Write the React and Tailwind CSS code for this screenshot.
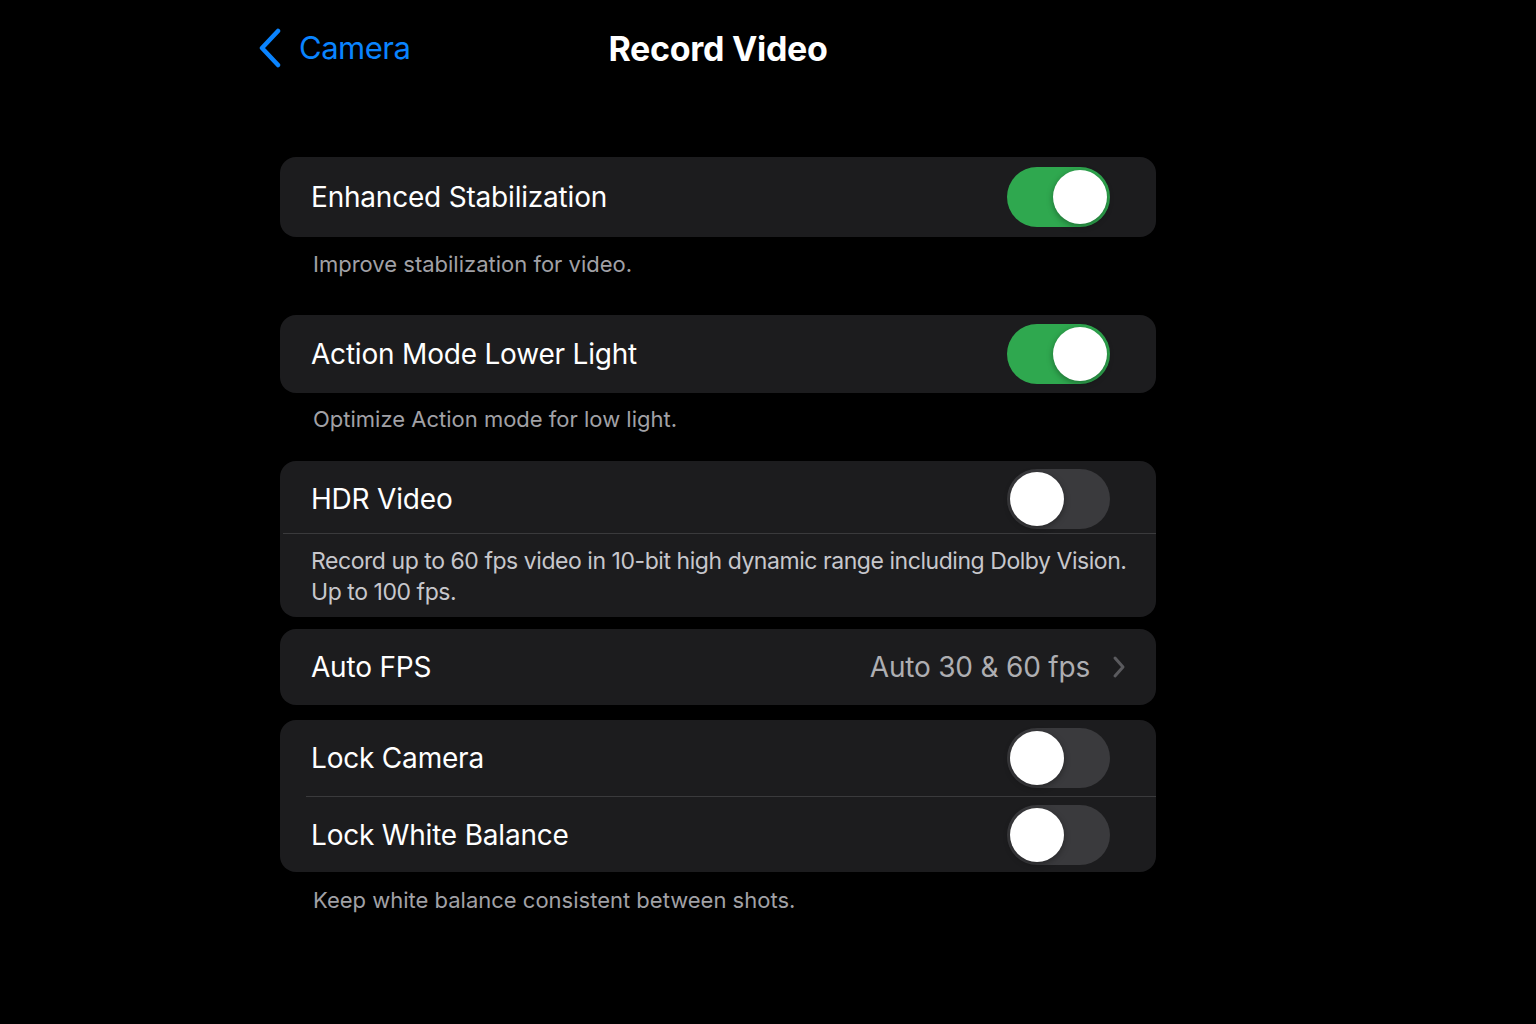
import React from "react";

function Toggle({ on }) {
  return (
    <div
      className={`relative w-[103px] h-[60px] rounded-full shrink-0 ${on ? "bg-[#2fa84f]" : "bg-[#3a3a3d]"}`}
    >
      <div
        className={`absolute top-[3px] w-[54px] h-[54px] rounded-full bg-white shadow-[0_2px_6px_rgba(0,0,0,0.35)] ${on ? "right-[3px]" : "left-[3px]"}`}
      />
    </div>
  );
}

function Row({ label, children, className = "" }) {
  return (
    <div className={`flex items-center justify-between pl-[31px] pr-[46px] ${className}`}>
      <span className="text-white text-[28px] tracking-[-0.2px]">{label}</span>
      {children}
    </div>
  );
}

function Footer({ children, className = "" }) {
  return (
    <p className={`pl-[33px] text-[22px] text-[#a1a1a6] ${className}`}>{children}</p>
  );
}

export default function App() {
  return (
    <div className="min-h-screen bg-black font-['Inter','Liberation_Sans',sans-serif] antialiased">
      <div className="w-[920px] ml-[258px] pt-[26px]">
        <div className="relative flex items-center h-[44px]">
          <div className="flex items-center gap-[17px] text-[#0a84ff]">
            <svg width="24" height="40" viewBox="0 0 24 40" fill="none">
              <path
                d="M20 3 L4 20 L20 37"
                stroke="#0a84ff"
                strokeWidth="4.5"
                strokeLinecap="round"
                strokeLinejoin="round"
              />
            </svg>
            <span className="text-[31px] tracking-[-0.5px]">Camera</span>
          </div>
          <h1 className="absolute inset-x-0 text-center text-white text-[34px] font-bold tracking-[-0.3px] pointer-events-none">
            Record Video
          </h1>
        </div>
      </div>

      <div className="w-[876px] ml-[280px] mt-[87px]">
        <div className="bg-[#1c1c1e] rounded-[16px] h-[80px] flex flex-col justify-center">
          <Row label="Enhanced Stabilization">
            <Toggle on />
          </Row>
        </div>
        <Footer className="mt-[14px] leading-[26px]">Improve stabilization for video.</Footer>

        <div className="bg-[#1c1c1e] rounded-[16px] h-[78px] mt-[38px] flex flex-col justify-center">
          <Row label="Action Mode Lower Light">
            <Toggle on />
          </Row>
        </div>
        <Footer className="mt-[13px] leading-[26px]">Optimize Action mode for low light.</Footer>

        <div className="bg-[#1c1c1e] rounded-[16px] mt-[29px] overflow-hidden">
          <Row label="HDR Video" className="h-[72px] pt-[4px]">
            <Toggle />
          </Row>
          <div className="h-px bg-[#3a3a3c] ml-[3px]" />
          <p className="pl-[31px] pt-[12px] pb-[9px] text-[23px] leading-[31px] text-[#c7c7cc] tracking-[-0.45px] whitespace-nowrap">
            Record up to 60 fps video in 10-bit high dynamic range including Dolby Vision.
            <br />
            Up to 100 fps.
          </p>
        </div>

        <div className="bg-[#1c1c1e] rounded-[16px] h-[76px] mt-[12px] flex items-center justify-between pl-[31px] pr-[30px]">
          <span className="text-white text-[28px] tracking-[-0.2px]">Auto FPS</span>
          <div className="flex items-center gap-[22px]">
            <span className="text-[#aeaeb2] text-[28px] tracking-[-0.2px]">Auto 30 &amp; 60 fps</span>
            <svg width="14" height="24" viewBox="0 0 14 24" fill="none">
              <path
                d="M3 3 L11 12 L3 21"
                stroke="#5a5a5e"
                strokeWidth="3"
                strokeLinecap="round"
                strokeLinejoin="round"
              />
            </svg>
          </div>
        </div>

        <div className="bg-[#1c1c1e] rounded-[16px] mt-[15px]">
          <Row label="Lock Camera" className="h-[76px] pl-[30px]">
            <Toggle />
          </Row>
          <div className="h-px bg-[#3a3a3c] ml-[26px]" />
          <Row label="Lock White Balance" className="h-[75px] pl-[30px]">
            <Toggle />
          </Row>
        </div>
        <Footer className="mt-[15px] leading-[26px]">Keep white balance consistent between shots.</Footer>
      </div>
    </div>
  );
}
